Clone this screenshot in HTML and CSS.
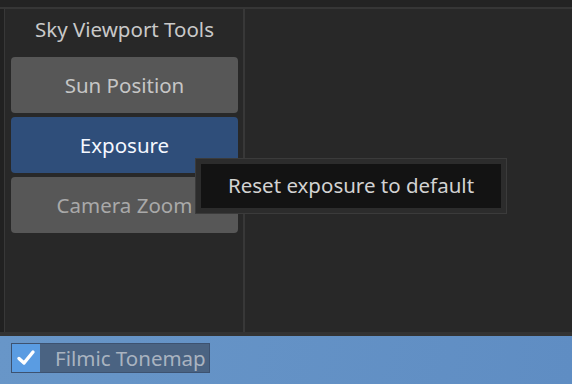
FILE: index.html
```html
<!DOCTYPE html>
<html lang="en">
<head>
  <meta charset="UTF-8">
  <meta name="viewport" content="width=device-width, initial-scale=1.0">
  <title>Sky Viewport Tools</title>
  <link rel="stylesheet" href="styles.css">
</head>
<body>
  <div class="topbar"></div>
  <div class="workspace">
    <div class="sidebar">
      <h2 class="sidebar-title">Sky Viewport Tools</h2>
      <button class="tool">Sun Position</button>
      <button class="tool active">Exposure</button>
      <button class="tool dim">Camera Zoom</button>
    </div>
    <div class="viewport"></div>
  </div>
  <div class="statusbar">
    <label class="toggle">
      <span class="box">
        <svg width="20" height="18" viewBox="0 0 20 18"><path d="M3 9.5 L8 14 L17 3" fill="none" stroke="#fff" stroke-width="3.4" stroke-linecap="round" stroke-linejoin="round"/></svg>
      </span>
      <span class="toggle-label">Filmic Tonemap</span>
    </label>
  </div>
  <!-- tooltip shown over the Exposure button -->
  <div class="tooltip">
    <div class="tooltip-inner">Reset exposure to default</div>
  </div>
</body>
</html>
```

FILE: styles.css
```css
* {
  margin: 0;
  padding: 0;
  box-sizing: border-box;
}
body {
  font-family: 'Noto Sans', 'Open Sans', sans-serif;
  background: #212121;
  color: #c8c8c8;
  width: 572px;
  height: 384px;
  overflow: hidden;
  position: relative;
}
.topbar {
  height: 9px;
  background: #232323;
  border-bottom: 2px solid #363636;
}
.workspace {
  display: flex;
  height: 327px;
  padding-left: 4px;
  border-bottom: 4px solid #333;
}
.sidebar {
  width: 241px;
  background: #282828;
  border-left: 1px solid #383838;
  border-right: 2px solid #383838;
  padding: 0 5px 0 6px;
  display: flex;
  flex-direction: column;
  gap: 4px;
}
.sidebar-title {
  font-size: 20.5px;
  font-weight: normal;
  text-align: center;
  color: #c9c9c9;
  height: 44px;
  line-height: 40px;
}
.tool {
  font-family: inherit;
  font-size: 20.5px;
  height: 56px;
  border: none;
  border-radius: 4px;
  background: #575757;
  color: #c6c6c6;
}
.tool.active {
  background: #2f4e7a;
  color: #f4f8ff;
}
.tool.dim {
  color: #a9a9a9;
}
.viewport {
  flex: 1;
  background: #282828;
}
.statusbar {
  height: 48px;
  background: linear-gradient(100deg, #6896c8, #5f8dc3);
  padding: 7px 11px;
}
.toggle {
  display: inline-flex;
  align-items: center;
  width: 199px;
  height: 30px;
  background: #4a6382;
  border: 1px solid #3d5270;
}
.box {
  width: 28px;
  height: 28px;
  background: #5a9ce2;
  display: flex;
  align-items: center;
  justify-content: center;
}
.toggle-label {
  margin-left: 15px;
  font-size: 20.5px;
  color: #a9b3c0;
}
.tooltip {
  position: absolute;
  left: 195px;
  top: 158px;
  width: 312px;
  height: 56px;
  background: #2c2c2c;
  border: 1px solid #3b3b3b;
  padding: 5px;
}
.tooltip-inner {
  height: 100%;
  background: #131313;
  color: #d2d2d2;
  font-size: 20.5px;
  text-align: center;
  line-height: 43px;
}
```
